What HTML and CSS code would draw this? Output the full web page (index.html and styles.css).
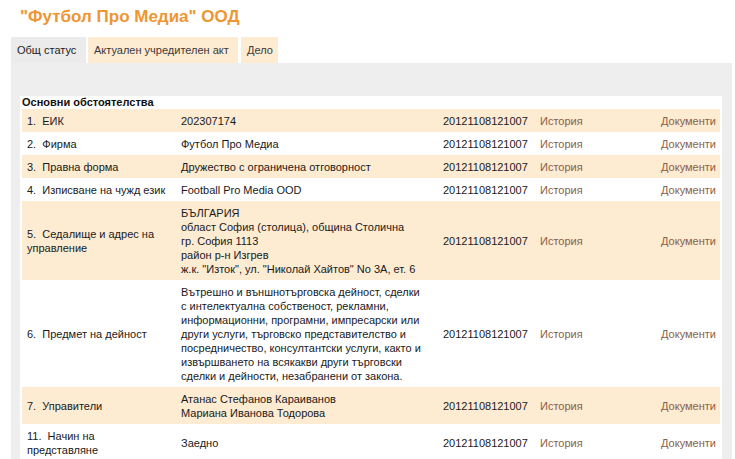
FILE: index.html
```html
<!DOCTYPE html>
<html lang="bg">
<head>
<meta charset="utf-8">
<title>"Футбол Про Медиа" ООД</title>
<link rel="stylesheet" href="styles.css">
</head>
<body>
<h1 class="title">"Футбол Про Медиа" ООД</h1>
<div class="tabs">
  <span class="tab tab-active">Общ статус</span>
  <span class="tab tab-act">Актуален учредителен акт</span>
  <span class="tab tab-case">Дело</span>
</div>
<div class="panel">
  <div class="sheet">
    <table class="facts">
      <colgroup>
        <col class="c-label"><col class="c-value"><col class="c-date"><col class="c-hist"><col class="c-docs">
      </colgroup>
      <tr class="head"><th colspan="5">Основни обстоятелства</th></tr>
      <tr class="odd">
        <td>1.&nbsp; ЕИК</td><td class="val">202307174</td><td>20121108121007</td><td class="link">История</td><td class="link docs">Документи</td>
      </tr>
      <tr>
        <td>2.&nbsp; Фирма</td><td class="val">Футбол Про Медиа</td><td>20121108121007</td><td class="link">История</td><td class="link docs">Документи</td>
      </tr>
      <tr class="odd">
        <td>3.&nbsp; Правна форма</td><td class="val">Дружество с ограничена отговорност</td><td>20121108121007</td><td class="link">История</td><td class="link docs">Документи</td>
      </tr>
      <tr>
        <td>4.&nbsp; Изписване на чужд език</td><td class="val">Football Pro Media OOD</td><td>20121108121007</td><td class="link">История</td><td class="link docs">Документи</td>
      </tr>
      <tr class="odd">
        <td>5.&nbsp; Седалище и адрес на<br>управление</td>
        <td class="val">БЪЛГАРИЯ<br>област София (столица), община Столична<br>гр. София 1113<br>район р-н Изгрев<br>ж.к. "Изток", ул. "Николай Хайтов" No 3А, ет. 6</td>
        <td>20121108121007</td><td class="link">История</td><td class="link docs">Документи</td>
      </tr>
      <tr>
        <td>6.&nbsp; Предмет на дейност</td>
        <td class="val">Вътрешно и външнотърговска дейност, сделки<br>с интелектуална собственост, рекламни,<br>информационни, програмни, импресарски или<br>други услуги, търговско представителство и<br>посредничество, консултантски услуги, както и<br>извършването на всякакви други търговски<br>сделки и дейности, незабранени от закона.</td>
        <td>20121108121007</td><td class="link">История</td><td class="link docs">Документи</td>
      </tr>
      <tr class="odd">
        <td>7.&nbsp; Управители</td>
        <td class="val">Атанас Стефанов Караиванов<br>Мариана Иванова Тодорова</td>
        <td>20121108121007</td><td class="link">История</td><td class="link docs">Документи</td>
      </tr>
      <tr>
        <td>11.&nbsp; Начин на<br>представляне</td>
        <td class="val">Заедно</td>
        <td>20121108121007</td><td class="link">История</td><td class="link docs">Документи</td>
      </tr>
    </table>
  </div>
</div>
</body>
</html>
```

FILE: styles.css
```css
html, body {
  margin: 0;
  padding: 0;
  background: #ffffff;
}

body {
  font-family: "Liberation Sans", Arial, Helvetica, sans-serif;
  font-size: 11px;
  color: #1a1a1a;
}

.title {
  margin: 7px 0 0 20px;
  font-size: 17px;
  line-height: 20px;
  font-weight: bold;
  color: #ee9632;
}

.tabs {
  display: flex;
  gap: 2px;
  margin: 10px 0 0 11px;
  height: 26px;
}

.tab {
  display: block;
  padding: 0 6px;
  line-height: 26px;
  color: #3a3a3a;
  background: #fdebd2;
}

.tab-active {
  width: 63px;
  background: #ebebeb;
  color: #222222;
}

.tab-act {
  width: 138px;
}

.tab-case {
  margin-left: 1px;
  width: 25px;
}

.panel {
  margin: 0 3px 0 11px;
  background: #eeeeee;
  padding: 33px 10px 0 9px;
}

.sheet {
  background: #ffffff;
  padding: 0 2px 20px 2px;
}

.facts {
  width: 100%;
  table-layout: fixed;
  border-collapse: collapse;
}

.c-label { width: 154px; }
.c-value { width: 262px; }
.c-date { width: 97px; }
.c-hist { width: 90px; }

.facts th {
  text-align: left;
  font-weight: bold;
  padding: 0;
  height: 13px;
  line-height: 13px;
  color: #111111;
}

.facts td {
  padding: 4.5px 5px;
  line-height: 14px;
  vertical-align: middle;
}

.facts tr.odd td {
  background: #fdebd2;
}

.facts td.val {
  white-space: nowrap;
}

.facts td.link {
  color: #8a5f48;
}

.facts td.docs {
  text-align: right;
  padding-right: 4px;
}
```
